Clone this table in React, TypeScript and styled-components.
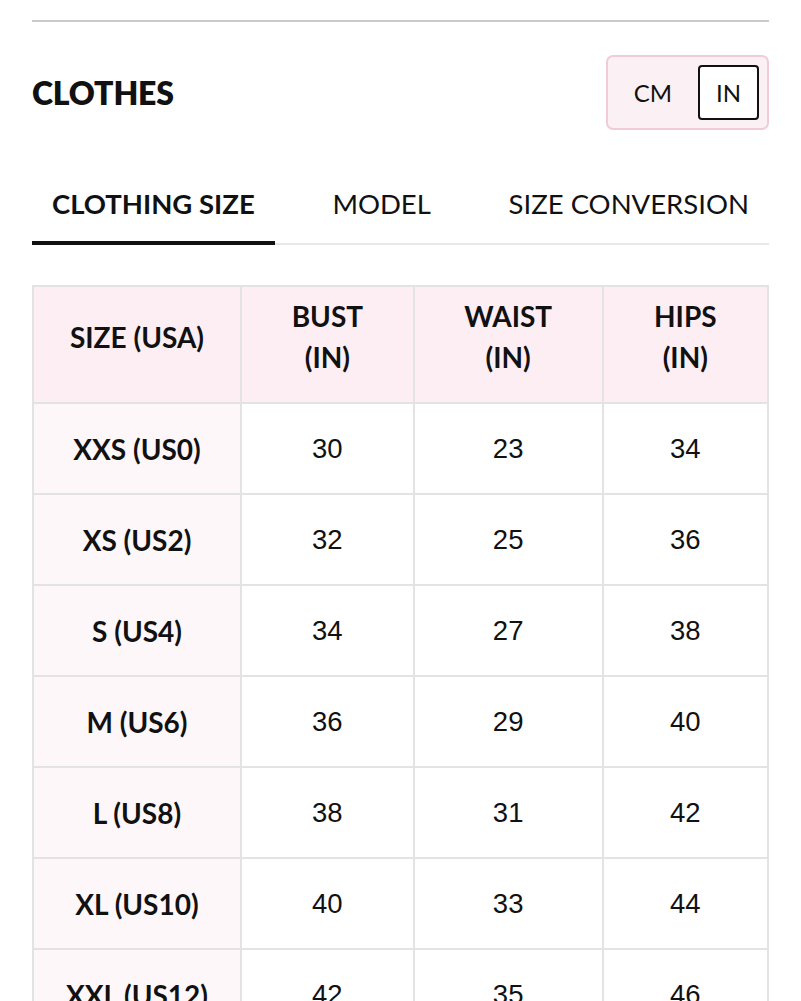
import React, { useState } from 'react';
import styled, { createGlobalStyle } from 'styled-components';

const GlobalStyle = createGlobalStyle`
  body {
    margin: 0;
    background: #fff;
    color: #111;
    font-family: Lato, 'Noto Sans', sans-serif;
  }
`;

const Page = styled.div`
  padding: 20px 32px 0;
`;

const TopRule = styled.div`
  height: 2px;
  background-color: #cacaca;
`;

const HeaderRow = styled.div`
  display: flex;
  align-items: center;
  justify-content: space-between;
  margin-top: 33px;
`;

const Title = styled.h1`
  margin: 0;
  font-size: 32px;
  font-weight: 800;
  letter-spacing: -0.2px;
`;

const UnitToggle = styled.div`
  display: flex;
  gap: 8px;
  padding: 8px;
  border: 2px solid #f1cbda;
  border-radius: 7px;
  background-color: #fbf1f5;
`;

const UnitButton = styled.button<{ active?: boolean }>`
  height: 55px;
  padding: 0 16px;
  font-family: Lato, sans-serif;
  font-size: 24px;
  color: #111;
  background-color: ${({ active }) => (active ? '#fff' : 'transparent')};
  border: 2px solid ${({ active }) => (active ? '#111' : 'transparent')};
  border-radius: 4px;
  cursor: pointer;
`;

const TabBar = styled.div`
  display: flex;
  justify-content: space-between;
  margin-top: 40px;
  border-bottom: 2px solid #e8e8e8;
`;

const Tab = styled.button<{ active?: boolean }>`
  padding: 18px 20px 21px;
  margin-bottom: -2px;
  font-family: Lato, sans-serif;
  font-size: 27.5px;
  line-height: 32px;
  font-weight: ${({ active }) => (active ? 700 : 400)};
  color: #111;
  background: none;
  border: none;
  border-bottom: 4px solid ${({ active }) => (active ? '#111' : 'transparent')};
  cursor: pointer;
`;

const SizeTable = styled.table`
  width: 100%;
  margin-top: 40px;
  border-collapse: collapse;
  table-layout: fixed;
`;

const HeadCell = styled.th`
  padding: 9px 8px 24px;
  font-size: 28px;
  line-height: 41px;
  font-weight: 700;
  text-align: center;
  background-color: #fdeef4;
  border: 2px solid #e3e3e3;
`;

const LabelCell = styled.td`
  padding: 22.5px 8px;
  font-size: 28px;
  line-height: 44px;
  font-weight: 700;
  text-align: center;
  background-color: #fdf7f9;
  border: 2px solid #e3e3e3;
`;

const ValueCell = styled.td`
  padding: 22.5px 8px;
  font-family: 'Liberation Sans', Arial, sans-serif;
  font-size: 27.5px;
  line-height: 44px;
  text-align: center;
  border: 2px solid #e3e3e3;
`;

const sizes = [
  { label: 'XXS (US0)', bust: 30, waist: 23, hips: 34 },
  { label: 'XS (US2)', bust: 32, waist: 25, hips: 36 },
  { label: 'S (US4)', bust: 34, waist: 27, hips: 38 },
  { label: 'M (US6)', bust: 36, waist: 29, hips: 40 },
  { label: 'L (US8)', bust: 38, waist: 31, hips: 42 },
  { label: 'XL (US10)', bust: 40, waist: 33, hips: 44 },
  { label: 'XXL (US12)', bust: 42, waist: 35, hips: 46 },
];

const tabs = ['CLOTHING SIZE', 'MODEL', 'SIZE CONVERSION'];

const App: React.FC = () => {
  const [unit, setUnit] = useState<'cm' | 'in'>('in');
  const [tab, setTab] = useState(0);

  return (
    <>
      <GlobalStyle />
      <Page>
        <TopRule />

        <HeaderRow>
          <Title>CLOTHES</Title>
          <UnitToggle>
            <UnitButton active={unit === 'cm'} onClick={() => setUnit('cm')}>CM</UnitButton>
            <UnitButton active={unit === 'in'} onClick={() => setUnit('in')}>IN</UnitButton>
          </UnitToggle>
        </HeaderRow>

        <TabBar>
          {tabs.map((t, i) => (
            <Tab key={t} active={tab === i} onClick={() => setTab(i)}>
              {t}
            </Tab>
          ))}
        </TabBar>

        <SizeTable>
          <colgroup>
            <col style={{ width: '28.3%' }} />
            <col style={{ width: '23.5%' }} />
            <col style={{ width: '25.7%' }} />
            <col style={{ width: '22.5%' }} />
          </colgroup>
          <thead>
            <tr>
              <HeadCell>SIZE (USA)</HeadCell>
              <HeadCell>BUST<br />(IN)</HeadCell>
              <HeadCell>WAIST<br />(IN)</HeadCell>
              <HeadCell>HIPS<br />(IN)</HeadCell>
            </tr>
          </thead>
          <tbody>
            {sizes.map(s => (
              <tr key={s.label}>
                <LabelCell>{s.label}</LabelCell>
                <ValueCell>{s.bust}</ValueCell>
                <ValueCell>{s.waist}</ValueCell>
                <ValueCell>{s.hips}</ValueCell>
              </tr>
            ))}
          </tbody>
        </SizeTable>
      </Page>
    </>
  );
};

export default App;
